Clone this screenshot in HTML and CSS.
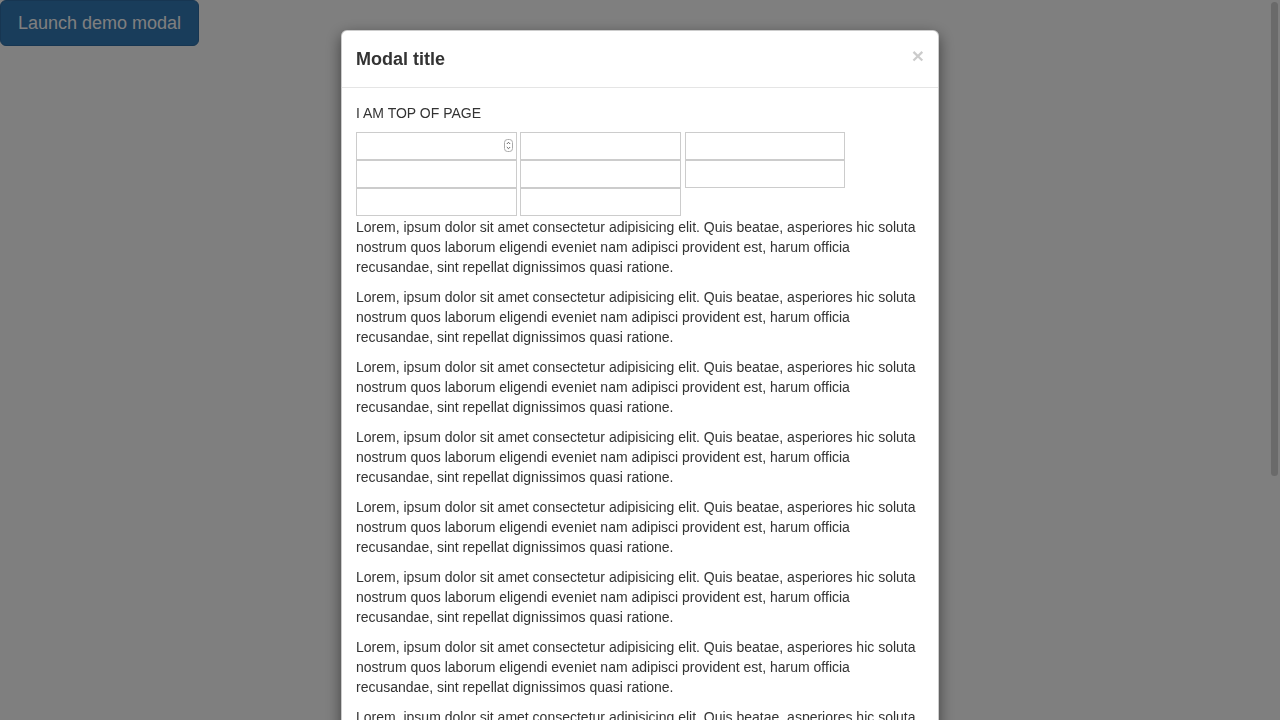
FILE: index.html
```html
<!DOCTYPE html>
<html lang="en">
<head>
<meta charset="UTF-8">
<meta name="viewport" content="width=device-width, initial-scale=1.0">
<title>Modal demo</title>
<link rel="stylesheet" href="styles.css">
</head>
<body>
<button type="button" class="btn-launch">Launch demo modal</button>

<div class="backdrop"></div>

<!-- Modal -->
<div class="modal">
  <div class="modal-dialog">
    <div class="modal-content">
      <div class="modal-header">
        <button type="button" class="close">&times;</button>
        <h4 class="modal-title">Modal title</h4>
      </div>
      <div class="modal-body">
        <div class="top-text">I AM TOP OF PAGE</div>
        <div class="fields">
          <div class="field-col">
            <div class="num-wrap">
              <input type="text" class="field">
              <span class="spinner">
                <svg width="9" height="13" viewBox="0 0 9 13">
                  <rect x="0.5" y="0.5" width="8" height="12" rx="3" fill="#fff" stroke="#aaa"/>
                  <path d="M2.8 5 L4.5 3.3 L6.2 5" fill="none" stroke="#555" stroke-width="0.9"/>
                  <path d="M2.8 8 L4.5 9.7 L6.2 8" fill="none" stroke="#555" stroke-width="0.9"/>
                </svg>
              </span>
            </div>
            <input type="text" class="field">
            <input type="text" class="field">
          </div>
          <div class="field-col">
            <input type="text" class="field">
            <input type="text" class="field">
            <input type="text" class="field">
          </div>
          <div class="field-col col-last">
            <input type="text" class="field">
            <input type="text" class="field">
          </div>
        </div>
        <p>Lorem, ipsum dolor sit amet consectetur adipisicing elit. Quis beatae, asperiores hic soluta nostrum quos laborum eligendi eveniet nam adipisci provident est, harum officia recusandae, sint repellat dignissimos quasi ratione.</p>
        <p>Lorem, ipsum dolor sit amet consectetur adipisicing elit. Quis beatae, asperiores hic soluta nostrum quos laborum eligendi eveniet nam adipisci provident est, harum officia recusandae, sint repellat dignissimos quasi ratione.</p>
        <p>Lorem, ipsum dolor sit amet consectetur adipisicing elit. Quis beatae, asperiores hic soluta nostrum quos laborum eligendi eveniet nam adipisci provident est, harum officia recusandae, sint repellat dignissimos quasi ratione.</p>
        <p>Lorem, ipsum dolor sit amet consectetur adipisicing elit. Quis beatae, asperiores hic soluta nostrum quos laborum eligendi eveniet nam adipisci provident est, harum officia recusandae, sint repellat dignissimos quasi ratione.</p>
        <p>Lorem, ipsum dolor sit amet consectetur adipisicing elit. Quis beatae, asperiores hic soluta nostrum quos laborum eligendi eveniet nam adipisci provident est, harum officia recusandae, sint repellat dignissimos quasi ratione.</p>
        <p>Lorem, ipsum dolor sit amet consectetur adipisicing elit. Quis beatae, asperiores hic soluta nostrum quos laborum eligendi eveniet nam adipisci provident est, harum officia recusandae, sint repellat dignissimos quasi ratione.</p>
        <p>Lorem, ipsum dolor sit amet consectetur adipisicing elit. Quis beatae, asperiores hic soluta nostrum quos laborum eligendi eveniet nam adipisci provident est, harum officia recusandae, sint repellat dignissimos quasi ratione.</p>
        <p>Lorem, ipsum dolor sit amet consectetur adipisicing elit. Quis beatae, asperiores hic soluta nostrum quos laborum eligendi eveniet nam adipisci provident est, harum officia recusandae, sint repellat dignissimos quasi ratione.</p>
        <p>Lorem, ipsum dolor sit amet consectetur adipisicing elit. Quis beatae, asperiores hic soluta nostrum quos laborum eligendi eveniet nam adipisci provident est, harum officia recusandae, sint repellat dignissimos quasi ratione.</p>
      </div>
    </div>
  </div>
  <div class="scroll-thumb"></div>
</div>
</body>
</html>
```

FILE: styles.css
```css
html, body {
    margin: 0;
    padding: 0;
    height: 100%;
    overflow: hidden;
}

body {
    font-family: "Liberation Sans", Arial, sans-serif;
    font-size: 14px;
    line-height: 20px;
    color: #333;
    background-color: #fff;
}

.btn-launch {
    display: block;
    margin: 0;
    padding: 10px 16px;
    font-family: "Liberation Sans", Arial, sans-serif;
    font-size: 18px;
    line-height: 24px;
    color: #fff;
    background-color: #337ab7;
    border: 1px solid #2e6da4;
    border-radius: 6px;
    width: 199px;
}

/* dark layer behind the modal */
.backdrop {
    position: fixed;
    top: 0;
    left: 0;
    right: 0;
    bottom: 0;
    background-color: #000;
    opacity: 0.5;
}

.modal {
    position: fixed;
    top: 0;
    left: 0;
    right: 0;
    bottom: 0;
    overflow: hidden;
}

.modal-dialog {
    width: 598px;
    margin: 30px auto;
}

.modal-content {
    background-color: #fff;
    border: 1px solid rgba(0, 0, 0, 0.2);
    border-radius: 6px;
    box-shadow: 0 5px 15px rgba(0, 0, 0, 0.5);
}

.modal-header {
    padding: 15px 14px;
    border-bottom: 1px solid #e5e5e5;
}

.modal-title {
    margin: 0;
    font-size: 18px;
    font-weight: bold;
    line-height: 26px;
    color: #333;
}

.close {
    float: right;
    margin-top: -1px;
    padding: 0;
    background: transparent;
    border: 0;
    font-family: "Liberation Sans", Arial, sans-serif;
    font-size: 21px;
    font-weight: bold;
    line-height: 1;
    color: #000;
    opacity: 0.2;
}

.modal-body {
    padding: 15px 14px;
}

.top-text {
    margin-bottom: 9px;
}

.fields {
    display: flex;
    align-items: flex-start;
}

.field-col {
    display: flex;
    flex-direction: column;
    margin-right: 3px;
}

.field-col.col-last {
    margin-left: 1px;
}

.field-col.col-last .field {
    width: 160px;
}

.field {
    box-sizing: border-box;
    width: 161px;
    height: 28px;
    margin: 0;
    padding: 2px 4px;
    border: 1px solid #ccc;
    font-family: "Liberation Sans", Arial, sans-serif;
    font-size: 13px;
    outline: none;
}

.num-wrap {
    position: relative;
}

.spinner {
    position: absolute;
    right: 4px;
    top: 7px;
    line-height: 0;
}

p {
    margin: 1px 0 10px;
}

.modal-body p + p {
    margin-top: 0;
}

/* overlay scrollbar of the modal */
.scroll-thumb {
    position: absolute;
    top: 2px;
    right: 2px;
    width: 7px;
    height: 474px;
    border-radius: 4px;
    background-color: #6a6a6a;
}
```
